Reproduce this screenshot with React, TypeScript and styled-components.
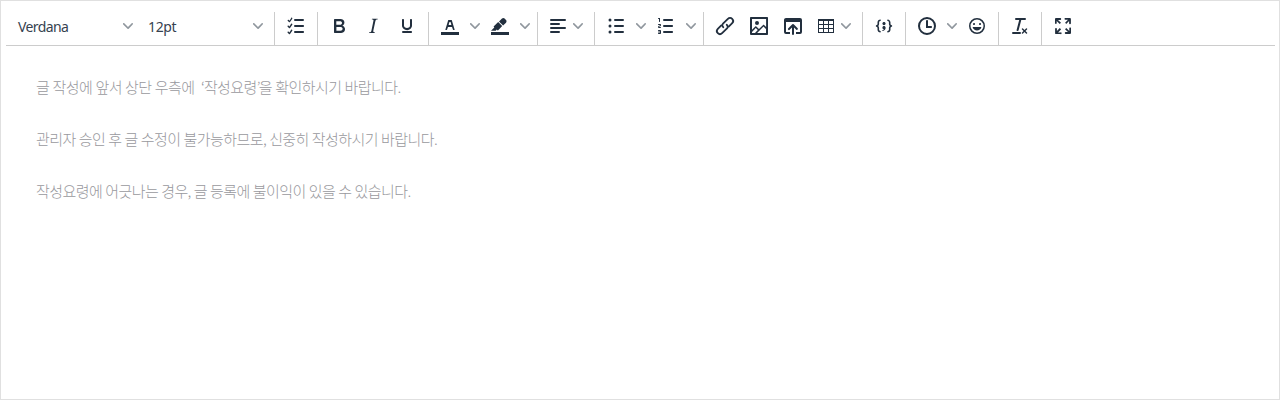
import React from "react";
import styled, { createGlobalStyle } from "styled-components";

const GlobalStyle = createGlobalStyle`
  *, *::before, *::after { box-sizing: border-box; }
  body { margin: 0; background: #fff; }
`;

const Editor = styled.div`
  display: flex;
  flex-direction: column;
  height: 400px;
  padding: 0 4px 0 5px;
  border: 1px solid #e0e0e0;
  background: #fff;
`;

const Toolbar = styled.div`
  display: flex;
  height: 45px;
  border-bottom: 1px solid #ccc;
`;

const Group = styled.div`
  display: flex;
  align-items: flex-start;
  height: 33px;
  margin-top: 11px;
  padding: 0 4px;

  &:not(:last-child) {
    border-right: 1px solid #ccc;
  }
`;

const Button = styled.button<{ $width?: number }>`
  display: flex;
  align-items: center;
  justify-content: center;
  width: ${(p) => p.$width ?? 34}px;
  height: 34px;
  margin: -3px 0 0;
  padding: 0;
  border: 0;
  background: none;
  color: #222f3e;
`;

const Select = styled(Button)`
  justify-content: space-between;
  padding: 0 4px 0 8px;
  color: #36424f;
  font: 14px/20px "Noto Sans", "Open Sans", sans-serif;
`;

const SelectLabel = styled.span<{ $spacing: number }>`
  padding-top: 2px;
  letter-spacing: ${(p) => p.$spacing}px;
`;

const IconSvg = styled.svg`
  display: block;
  flex: none;
  fill: currentColor;
`;

const ChevronBox = styled.span`
  display: flex;
  flex: none;
  align-items: center;
  justify-content: center;
  width: 16px;
  height: 34px;
  color: rgba(34, 47, 62, 0.5);
`;

const Content = styled.div`
  padding: 28px 30px;
  color: #98989d;
  font-family: "Noto Sans CJK KR", sans-serif;
  font-size: 15px;
  font-weight: 300;
  line-height: 26px;
`;

const Paragraph = styled.p<{ $wordSpacing: number }>`
  margin: 0 0 26px;
  white-space: pre;
  letter-spacing: -0.57px;
  word-spacing: ${(p) => p.$wordSpacing}px;
`;

const Quote = styled.span<{ $spacing: number }>`
  letter-spacing: ${(p) => p.$spacing}px;
`;

const icons = {
  checklist:
    "M11 17h8c.6 0 1 .4 1 1s-.4 1-1 1h-8a1 1 0 010-2zm0-6h8c.6 0 1 .4 1 1s-.4 1-1 1h-8a1 1 0 010-2zm0-6h8a1 1 0 010 2h-8a1 1 0 110-2zM7.2 16c.2-.4.6-.5.9-.3.3.2.4.6.2 1L6 20c-.2.3-.7.4-1 0l-1.3-1.3a.7.7 0 010-1c.3-.2.7-.2 1 0l.7.9 1.7-2.8zm0-6c.2-.4.6-.5.9-.3.3.2.4.6.2 1L6 14c-.2.3-.7.4-1 0l-1.3-1.3a.7.7 0 010-1c.3-.2.7-.2 1 0l.7.9 1.7-2.8zm0-6c.2-.4.6-.5.9-.3.3.2.4.6.2 1L6 8c-.2.3-.7.4-1 0L3.8 6.9a.7.7 0 010-1c.3-.2.7-.2 1 0l.7.9 1.7-2.8z",
  bold: "M7.8 19c-.3 0-.5 0-.6-.2l-.2-.5V5.7c0-.2 0-.4.2-.5l.6-.2h5c1.5 0 2.7.3 3.5 1 .7.6 1.1 1.4 1.1 2.5a3 3 0 01-.6 1.9c-.4.6-1 1-1.6 1.2.4.1.9.3 1.3.6s.8.7 1 1.2c.4.4.5 1 .5 1.6 0 1.3-.4 2.3-1.3 3-.8.7-2.1 1-3.8 1H7.8zm5-8.3c.6 0 1.2-.1 1.6-.5.4-.3.6-.7.6-1.3 0-1.1-.8-1.7-2.3-1.7H9.3v3.5h3.4zm.5 6c.7 0 1.3-.1 1.7-.4.4-.4.6-.9.6-1.5s-.2-1-.7-1.4c-.4-.3-1-.4-2-.4H9.4v3.8h4z",
  italic:
    "M16.7 4.7l-.1.9h-.3c-.6 0-1 0-1.4.3-.3.3-.4.6-.5 1.1l-2.1 9.8v.6c0 .5.4.8 1.4.8h.2l-.2.8H8l.2-.8h.2c1.1 0 1.8-.5 2-1.5l2-9.8.1-.5c0-.6-.4-.8-1.4-.8h-.3l.2-.9h5.8z",
  underline:
    "M16 5c.6 0 1 .4 1 1v5.5a4 4 0 01-.4 1.8l-1 1.4a5.3 5.3 0 01-5.5 1 5 5 0 01-1.6-1c-.5-.4-.8-.9-1.1-1.4a4 4 0 01-.4-1.8V6c0-.6.4-1 1-1s1 .4 1 1v5.5c0 .3 0 .6.2 1l.6.7a3.3 3.3 0 002.2.8 3.4 3.4 0 002.2-.8c.3-.2.4-.5.6-.8l.2-.9V6c0-.6.4-1 1-1zM8 17h8c.6 0 1 .4 1 1s-.4 1-1 1H8a1 1 0 010-2z",
  textColor:
    "M3 18h18v3H3zM8.7 16h-.8a.5.5 0 01-.5-.6l2.7-9c.1-.3.3-.4.5-.4h2.8c.2 0 .4.1.5.4l2.7 9a.5.5 0 01-.5.6h-.8a.5.5 0 01-.4-.4l-.7-2.2c0-.3-.3-.4-.5-.4h-3.4c-.2 0-.4.1-.5.4l-.7 2.2c0 .3-.2.4-.4.4zm2.6-7.6l-.6 2a.5.5 0 00.5.6h1.6a.5.5 0 00.5-.6l-.6-2c0-.3-.3-.4-.5-.4h-.4c-.2 0-.4.1-.5.4z",
  highlight:
    "M3 18h18v3H3zM7.7 16.7H3l3.3-3.3-.7-.8L10.2 8l4 4.1-4 4.2c-.2.2-.6.2-.8 0l-.6-.7-1.1 1.1zm5-7.5L11 7.4l3-2.9a2 2 0 012.6 0L18 6c.7.7.7 2 0 2.7l-2.9 2.9-1.8-1.8-.5-.6z",
  alignLeft:
    "M5 5h14a1 1 0 010 2H5a1 1 0 110-2zm0 4h8a1 1 0 010 2H5a1 1 0 110-2zm0 8h8a1 1 0 010 2H5a1 1 0 010-2zm0-4h14a1 1 0 010 2H5a1 1 0 010-2z",
  bulletList:
    "M11 5h8a1 1 0 010 2h-8a1 1 0 010-2zm0 6h8a1 1 0 010 2h-8a1 1 0 010-2zm0 6h8a1 1 0 010 2h-8a1 1 0 010-2zM4.5 6a1.5 1.5 0 013 0 1.5 1.5 0 01-3 0zm0 6a1.5 1.5 0 013 0 1.5 1.5 0 01-3 0zm0 6a1.5 1.5 0 013 0 1.5 1.5 0 01-3 0z",
  numberList:
    "M10 17h8c.6 0 1 .4 1 1s-.4 1-1 1h-8a1 1 0 010-2zm0-6h8c.6 0 1 .4 1 1s-.4 1-1 1h-8a1 1 0 010-2zm0-6h8c.6 0 1 .4 1 1s-.4 1-1 1h-8a1 1 0 110-2zM6 4v3.5c0 .3-.2.5-.5.5a.5.5 0 01-.5-.5V5h-.5a.5.5 0 010-1H6zm-1 8.8l.2.2h1.3c.3 0 .5.2.5.5s-.2.5-.5.5H4.9a1 1 0 01-.9-1V13c0-.4.3-.8.6-1l1.2-.4.2-.3a.2.2 0 00-.2-.2H4.5a.5.5 0 01-.5-.5c0-.3.2-.5.5-.5h1.6c.5 0 .9.4.9 1v.1c0 .4-.3.8-.6 1l-1.2.4-.2.3zM7 17v2c0 .6-.4 1-1 1H4.5a.5.5 0 010-1h1.2c.2 0 .3-.1.3-.3 0-.2-.1-.3-.3-.3H4.4a.4.4 0 110-.8h1.3c.2 0 .3-.1.3-.3 0-.2-.1-.3-.3-.3H4.5a.5.5 0 110-1H6c.6 0 1 .4 1 1z",
  image:
    "M5 15.7l3.3-3.2c.3-.3.7-.3 1 0L12 15l4.1-4c.3-.4.8-.4 1 0l2 1.9V5H5v10.7zM5 18V19h3l2.8-2.9-2-2L5 17.9zm14-3l-2.5-2.4-6.4 6.5H19v-4zM4 3h16c.6 0 1 .4 1 1v16c0 .6-.4 1-1 1H4a1 1 0 01-1-1V4c0-.6.4-1 1-1zm6 8a2 2 0 100-4 2 2 0 000 4z",
  browse:
    "M19 4a2 2 0 012 2v12a2 2 0 01-2 2h-4v-2h4V8H5v10h4v2H5a2 2 0 01-2-2V6c0-1.1.9-2 2-2h14zm-8 9.4l-2.3 2.3a1 1 0 11-1.4-1.4l4-4a1 1 0 011.4 0l4 4a1 1 0 01-1.4 1.4L13 13.4V20a1 1 0 01-2 0v-6.6z",
  table:
    "M4 5h16v14H4zM5 7v3h4V7zm5 0v3h4V7zm5 0v3h4V7zM5 11v3h4v-3zm5 0v3h4v-3zm5 0v3h4v-3zM5 15v3h4v-3zm5 0v3h4v-3zm5 0v3h4v-3z",
  code: "M7.1 11a2.8 2.8 0 01-.8 2 2.8 2.8 0 01.8 2v1.7c0 .3.1.6.4.8.2.3.5.4.8.4.3 0 .4.2.4.4v.8c0 .2-.1.4-.4.4-.7 0-1.4-.3-2-.8-.5-.6-.8-1.3-.8-2V15c0-.3-.1-.6-.4-.8-.2-.3-.5-.4-.8-.4a.4.4 0 01-.4-.4v-.8c0-.2.2-.4.4-.4.3 0 .6-.1.8-.4.3-.2.4-.5.4-.8V9.3c0-.7.3-1.4.8-2 .6-.5 1.3-.8 2-.8.3 0 .4.2.4.4v.8c0 .2-.1.4-.4.4-.3 0-.6.1-.8.4-.3.2-.4.5-.4.8V11zm9.8 0V9.3c0-.3-.1-.6-.4-.8-.2-.3-.5-.4-.8-.4a.4.4 0 01-.4-.4V7c0-.2.1-.4.4-.4.7 0 1.4.3 2 .8.5.6.8 1.3.8 2V11c0 .3.1.6.4.8.2.3.5.4.8.4.2 0 .4.2.4.4v.8c0 .2-.2.4-.4.4-.3 0-.6.1-.8.4-.3.2-.4.5-.4.8v1.7c0 .7-.3 1.4-.8 2-.6.5-1.3.8-2 .8a.4.4 0 01-.4-.4v-.8c0-.2.1-.4.4-.4.3 0 .6-.1.8-.4.3-.2.4-.5.4-.8V15a2.8 2.8 0 01.8-2 2.8 2.8 0 01-.8-2zm-3.3-.4c0 .4-.1.8-.5 1.1-.3.3-.7.5-1.1.5-.4 0-.8-.2-1.1-.5-.4-.3-.5-.7-.5-1.1 0-.5.1-.9.5-1.2.3-.3.7-.4 1.1-.4.4 0 .8.1 1.1.4.4.3.5.7.5 1.2zM12 13c.4 0 .8.1 1.1.5.4.3.5.7.5 1.1 0 1-.1 1.6-.5 2a3 3 0 01-1.1 1c-.4.3-.8.4-1.1.4a.5.5 0 01-.5-.5V17a3 3 0 001-.2l.6-.6c-.6 0-1-.2-1.3-.5-.2-.3-.3-.7-.3-1 0-.5.1-1 .5-1.2.3-.4.7-.5 1.1-.5z",
  clock:
    "M12 19a7 7 0 100-14 7 7 0 000 14zm0 2a9 9 0 110-18 9 9 0 010 18zM16 12h-3V7c0-.6-.4-1-1-1a1 1 0 00-1 1v7h5c.6 0 1-.4 1-1s-.4-1-1-1z",
  emoji:
    "M9 11c.6 0 1-.4 1-1s-.4-1-1-1a1 1 0 00-1 1c0 .6.4 1 1 1zm6 0c.6 0 1-.4 1-1s-.4-1-1-1a1 1 0 00-1 1c0 .6.4 1 1 1zm-3 5.5c2.1 0 4-1.5 4.4-3.5H7.6c.5 2 2.3 3.5 4.4 3.5zM12 4a8 8 0 100 16 8 8 0 000-16zm0 14.5a6.5 6.5 0 110-13 6.5 6.5 0 010 13z",
  removeFormat:
    "M13.2 6a1 1 0 010 .2l-2.6 10a1 1 0 01-1 .8h-.2a.8.8 0 01-.8-1l2.6-10H8a1 1 0 110-2h9a1 1 0 010 2h-3.8zM5 18h7a1 1 0 010 2H5a1 1 0 010-2zm13 1.5L16.5 18 15 19.5a.7.7 0 01-1-1l1.5-1.5-1.5-1.5a.7.7 0 011-1l1.5 1.5 1.5-1.5a.7.7 0 011 1L17.5 17l1.5 1.5a.7.7 0 01-1 1z",
  fullscreen:
    "M15.3 10l-1.2-1.3 2.9-3h-2.3a.9.9 0 110-1.7H19c.5 0 .9.4.9.9v4.4a.9.9 0 11-1.8 0V7l-2.9 3zm0 4l3 3v-2.3a.9.9 0 111.7 0V19c0 .5-.4.9-.9.9h-4.4a.9.9 0 110-1.8H17l-3-2.9 1.3-1.2zM10 15.4l-2.9 3h2.3a.9.9 0 110 1.7H5a.9.9 0 01-.9-.9v-4.4a.9.9 0 111.8 0V17l2.9-3 1.2 1.3zM8.7 10L5.7 7v2.3a.9.9 0 01-1.7 0V5c0-.5.4-.9.9-.9h4.4a.9.9 0 010 1.8H7l3 2.9-1.3 1.2z",
};

type IconName = keyof typeof icons;

const Icon = ({ name }: { name: IconName }) => (
  <IconSvg width="24" height="24" viewBox={name === "code" ? "0 1 24 24" : "0 0 24 24"}>
    <path d={icons[name]} fillRule="evenodd" />
  </IconSvg>
);

const LinkIcon = () => (
  <IconSvg width="24" height="24" viewBox="0 0 24 24">
    <g fill="none" stroke="currentColor" strokeWidth="1.8" strokeLinecap="round">
      <path d="M8.3 11.4L4.8 14.9a3 3 0 004.3 4.3l4.9-4.8a2.4 2.4 0 00-.3-3.6" />
      <path d="M15.7 12.6l3.5-3.5a3 3 0 00-4.3-4.3L10 9.6a2.4 2.4 0 00.3 3.6" />
    </g>
  </IconSvg>
);

const Chevron = () => (
  <ChevronBox>
    <IconSvg width="10" height="10" viewBox="0 0 10 10">
      <path d="M8.7 2.2c.3-.3.8-.3 1 0 .4.4.4.9 0 1.2L5.7 7.8c-.3.3-.9.3-1.2 0L.2 3.4a.8.8 0 010-1.2c.3-.3.8-.3 1.1 0L5 6l3.7-3.8z" />
    </IconSvg>
  </ChevronBox>
);

const Tool = ({ name }: { name: IconName }) => (
  <Button aria-label={name}>
    <Icon name={name} />
  </Button>
);

const SplitTool = ({ name }: { name: IconName }) => (
  <>
    <Tool name={name} />
    <Button $width={16} aria-label={`${name} options`}>
      <Chevron />
    </Button>
  </>
);

const MenuTool = ({ name }: { name: IconName }) => (
  <Button $width={48} aria-label={name}>
    <Icon name={name} />
    <Chevron />
  </Button>
);

export default function App() {
  return (
    <>
      <GlobalStyle />
      <Editor>
        <Toolbar>
          <Group>
            <Select $width={130}>
              <SelectLabel $spacing={-0.6}>Verdana</SelectLabel>
              <Chevron />
            </Select>
            <Select $width={130}>
              <SelectLabel $spacing={-0.35}>12pt</SelectLabel>
              <Chevron />
            </Select>
          </Group>
          <Group>
            <Tool name="checklist" />
          </Group>
          <Group>
            <Tool name="bold" />
            <Tool name="italic" />
            <Tool name="underline" />
          </Group>
          <Group>
            <SplitTool name="textColor" />
            <SplitTool name="highlight" />
          </Group>
          <Group>
            <MenuTool name="alignLeft" />
          </Group>
          <Group>
            <SplitTool name="bulletList" />
            <SplitTool name="numberList" />
          </Group>
          <Group>
            <Button aria-label="link">
              <LinkIcon />
            </Button>
            <Tool name="image" />
            <Tool name="browse" />
            <MenuTool name="table" />
          </Group>
          <Group>
            <Tool name="code" />
          </Group>
          <Group>
            <SplitTool name="clock" />
            <Tool name="emoji" />
          </Group>
          <Group>
            <Tool name="removeFormat" />
          </Group>
          <Group>
            <Tool name="fullscreen" />
          </Group>
        </Toolbar>
        <Content>
          <Paragraph $wordSpacing={0.5}>
            글 작성에 앞서 상단 우측에{"  "}
            <Quote $spacing={-0.9}>‘</Quote>작성요령<Quote $spacing={-1.8}>’</Quote>을 확인하시기 바랍니다.
          </Paragraph>
          <Paragraph $wordSpacing={0.3}>관리자 승인 후 글 수정이 불가능하므로, 신중히 작성하시기 바랍니다.</Paragraph>
          <Paragraph $wordSpacing={0.3}>작성요령에 어긋나는 경우, 글 등록에 불이익이 있을 수 있습니다.</Paragraph>
        </Content>
      </Editor>
    </>
  );
}
